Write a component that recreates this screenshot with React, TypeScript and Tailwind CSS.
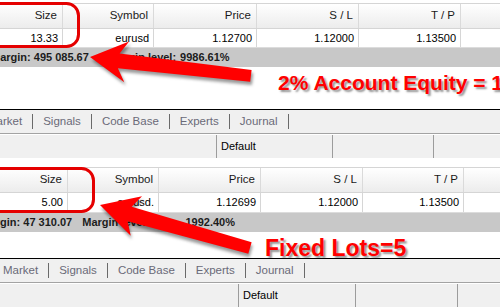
import React from "react";

interface PanelProps {
  topGap: string;
  cols: string[];
  cells: string[];
  rowH: string;
  margin: string;
  marginShift: string;
  level: string;
  levelGap: string;
  valueGap: string;
  note: string;
  noteSize: string;
  noteH: string;
  notePl: string;
  tabsShift: string;
  foot: string[];
}

const headers = ["Size", "Symbol", "Price", "S / L", "T / P", ""];
const tabs = ["Market", "Signals", "Code Base", "Experts", "Journal"];

function Panel(p: PanelProps) {
  return (
    <div className="flex flex-col">
      <div className={p.topGap} />

      {/* column headers */}
      <div className="flex h-[26px] border-y border-[#d5d5d5] bg-linear-to-b from-[#ffffff] to-[#ececec] text-[11.5px] text-[#1a1a1a]">
        {headers.map((h, i) => (
          <div
            key={i}
            className={`${p.cols[i]} flex items-center justify-end pr-[5px] ${i < 5 ? "border-r border-[#dadada]" : ""}`}
          >
            {h}
          </div>
        ))}
      </div>

      {/* order row */}
      <div className={`flex ${p.rowH} border-b border-[#dcdcdc] bg-white text-[11px] text-black`}>
        {p.cells.map((c, i) => (
          <div
            key={i}
            className={`${p.cols[i]} flex items-center justify-end pr-[4px] ${i < 5 ? "border-r border-[#d6d6d6]" : ""}`}
          >
            {c}
          </div>
        ))}
      </div>

      {/* balance line */}
      <div className="flex h-[19px] items-center overflow-hidden whitespace-nowrap bg-[#c8c8c8] text-[11px] font-bold text-[#1c1c1c]">
        <span className={p.marginShift}>{p.margin}</span>
        <span className={p.levelGap}>Margin level:</span>
        <span className={p.valueGap}>{p.level}</span>
      </div>

      {/* annotation */}
      <div className={`${p.noteH} ${p.notePl} overflow-hidden whitespace-nowrap bg-white pt-[5px]`}>
        <span className={`${p.noteSize} leading-none font-bold text-[#ff0000] [text-shadow:2px_2px_2px_rgba(60,60,60,0.55)]`}>
          {p.note}
        </span>
      </div>

      <div className="h-px bg-black" />

      {/* terminal tabs */}
      <div className="flex h-[23px] items-center gap-[10px] overflow-hidden whitespace-nowrap bg-[#f0f0f0] text-[11.5px] text-[#6a6a78]">
        {tabs.map((t, i) => (
          <React.Fragment key={t}>
            <span className={i === 0 ? p.tabsShift : ""}>{t}</span>
            <span className="h-[15px] w-px bg-[#6a6a6a]" />
          </React.Fragment>
        ))}
      </div>

      <div className="h-px bg-[#a3a3a3]" />
      <div className="h-px bg-white" />

      {/* toolbar row */}
      <div className="flex h-[23px] bg-[#f0f0f0] text-[11px] text-black">
        <div className={p.foot[0]} />
        <div className={`${p.foot[1]} flex items-center border-l border-[#9c9c9c] pl-[4px]`}>Default</div>
        <div className={`${p.foot[2]} border-l border-[#9c9c9c]`} />
        <div className="flex-1 border-l border-[#9c9c9c]" />
      </div>
    </div>
  );
}

function Overlay() {
  return (
    <svg className="pointer-events-none absolute inset-0" width="500" height="308" viewBox="0 0 500 308">
      <defs>
        <filter id="sh" x="-20%" y="-40%" width="140%" height="180%">
          <feGaussianBlur stdDeviation="1.6" />
        </filter>
      </defs>

      {/* highlight boxes */}
      <rect x="-20" y="3.5" width="98.5" height="43" rx="12" fill="none" stroke="#e50000" strokeWidth="3" />
      <rect x="-20" y="168.5" width="113.5" height="43" rx="12" fill="none" stroke="#e50000" strokeWidth="3" />

      {/* arrow to size 13.33 */}
      <g transform="translate(90 57) rotate(6.7)">
        <polygon
          transform="translate(2 3)"
          points="0,0 37,-20 29,-7 162,-6 162,6 29,8 37,21"
          fill="rgba(0,0,0,0.4)"
          filter="url(#sh)"
        />
        <polygon points="0,0 37,-20 29,-7 162,-6 162,6 29,8 37,21" fill="#ff0000" />
      </g>

      {/* arrow to size 5.00 */}
      <g transform="translate(100 205) rotate(16)">
        <polygon
          transform="translate(2 3)"
          points="0,0 38,-20 31,-7 156,-6 156,6 31,8 38,21"
          fill="rgba(0,0,0,0.4)"
          filter="url(#sh)"
        />
        <polygon points="0,0 38,-20 31,-7 156,-6 156,6 31,8 38,21" fill="#ff0000" />
      </g>
    </svg>
  );
}

export default function App() {
  return (
    <div className="relative h-[308px] w-[500px] overflow-hidden bg-white font-['Liberation_Sans',Arial,sans-serif]">
      <Panel
        topGap="h-[3px]"
        cols={["w-[63px]", "w-[91px]", "w-[103px]", "w-[102px]", "w-[102px]", "flex-1"]}
        cells={["13.33", "eurusd", "1.12700", "1.12000", "1.13500", ""]}
        rowH="h-[19px]"
        margin="Margin: 495 085.67"
        marginShift="-ml-[9px]"
        level="9986.61%"
        levelGap="ml-[20px]"
        valueGap="ml-[4px]"
        note="2% Account Equity = 13.33"
        noteSize="text-[21px]"
        noteH="h-[42px]"
        notePl="pl-[278px]"
        tabsShift="-ml-[13px]"
        foot={["w-[216px]", "w-[116px]", "w-[101px]"]}
      />
      <Panel
        topGap="h-[9px]"
        cols={["w-[68px]", "w-[91px]", "w-[102px]", "w-[102px]", "w-[101px]", "flex-1"]}
        cells={["5.00", "eurusd.", "1.12699", "1.12000", "1.13500", ""]}
        rowH="h-[20px]"
        margin="Margin: 47 310.07"
        marginShift="-ml-[19.5px]"
        level="1992.40%"
        levelGap="ml-[10px]"
        valueGap="ml-[36px]"
        note="Fixed Lots=5"
        noteSize="text-[23px]"
        noteH="h-[26px]"
        notePl="pl-[265px]"
        tabsShift="ml-[3px]"
        foot={["w-[238px]", "w-[117px]", "w-[102px]"]}
      />
      <Overlay />
    </div>
  );
}
